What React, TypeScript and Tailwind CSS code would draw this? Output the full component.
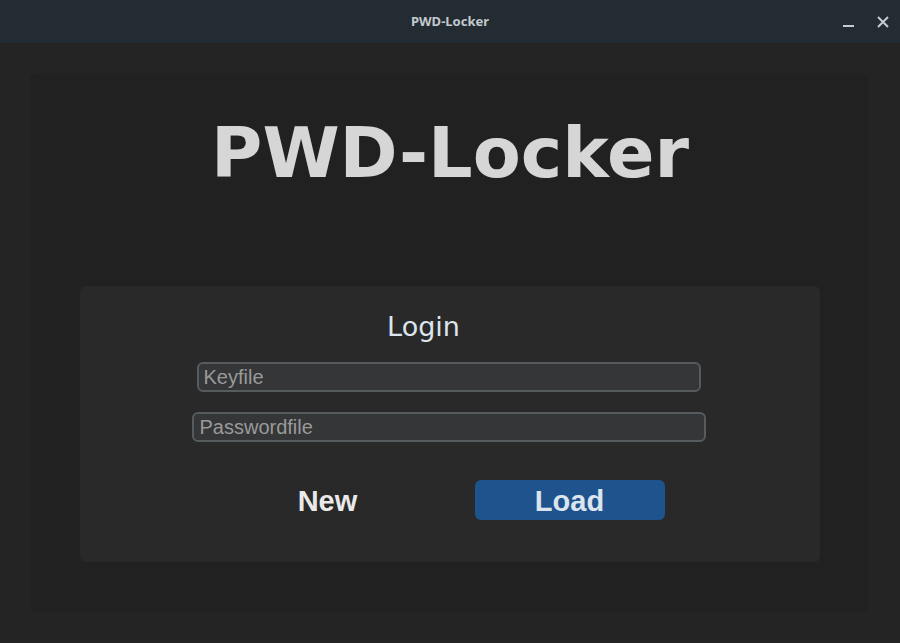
import React, { useState } from "react";

const App = () => {
    const [keyfile, setKeyfile] = useState("");
    const [passwordfile, setPasswordfile] = useState("");

    return (
        <div className="w-[900px] h-[643px] flex flex-col bg-[#242424] overflow-hidden">
            {/* window title bar */}
            <div className="h-[43px] shrink-0 bg-[#232c33] flex items-center justify-center relative">
                <span className="text-[13px] font-bold text-[#c3c9cd] font-['Noto_Sans',sans-serif]">PWD-Locker</span>
                <div className="absolute right-0 top-0 h-full flex items-center">
                    <svg width="12" height="12" viewBox="0 0 12 12" className="mr-[22px] mt-[2px]">
                        <rect x="0" y="8" width="11" height="2" fill="#c5cbd0" />
                    </svg>
                    <svg width="12" height="12" viewBox="0 0 12 12" className="mr-[11px]">
                        <path d="M1 1 L11 11 M11 1 L1 11" stroke="#c5cbd0" strokeWidth="2" />
                    </svg>
                </div>
            </div>

            <div className="flex-1 pt-[30px] pl-[30px] pr-[32px] pb-[31px] flex">
                <div className="flex-1 bg-[#212121] rounded-md flex flex-col items-center pt-[45px]">
                    <h1 className="text-[70px] leading-none font-bold text-[#d6d6d6] font-['DejaVu_Sans',sans-serif] ml-[2px]">
                        PWD-Locker
                    </h1>

                    <div className="mt-[98px] w-[740px] h-[276px] bg-[#292929] rounded-md flex flex-col items-center pt-[27px] ml-[2px]">
                        <h2 className="text-[27px] leading-none text-[#dce4ee] font-['DejaVu_Sans',sans-serif] -ml-[53px]">Login</h2>

                        <input
                            value={keyfile}
                            onChange={(e) => setKeyfile(e.target.value)}
                            placeholder="Keyfile"
                            className="mt-[22px] w-[504px] h-[30px] border-2 border-[#565b5e] bg-[#343638] rounded-md px-[5px] text-[20px] text-[#dce4ee] placeholder:text-[#9a9a9a] font-['Liberation_Sans',sans-serif] outline-none -ml-[3px]"
                        />
                        <input
                            value={passwordfile}
                            onChange={(e) => setPasswordfile(e.target.value)}
                            placeholder="Passwordfile"
                            className="mt-[20px] w-[514px] h-[30px] border-2 border-[#565b5e] bg-[#343638] rounded-md px-[6px] text-[20px] text-[#dce4ee] placeholder:text-[#9a9a9a] font-['Liberation_Sans',sans-serif] outline-none -ml-[3px]"
                        />

                        <div className="mt-[38px] flex gap-[52px] -ml-[3px]">
                            <button className="w-[190px] h-[40px] rounded-md bg-transparent text-[29px] font-bold text-[#eaeaea] font-['Liberation_Sans',sans-serif]">
                                New
                            </button>
                            <button className="w-[190px] h-[40px] rounded-md bg-[#1f538d] text-[29px] font-bold text-[#dce4ee] font-['Liberation_Sans',sans-serif]">
                                Load
                            </button>
                        </div>
                    </div>
                </div>
            </div>
        </div>
    );
};

export default App;
